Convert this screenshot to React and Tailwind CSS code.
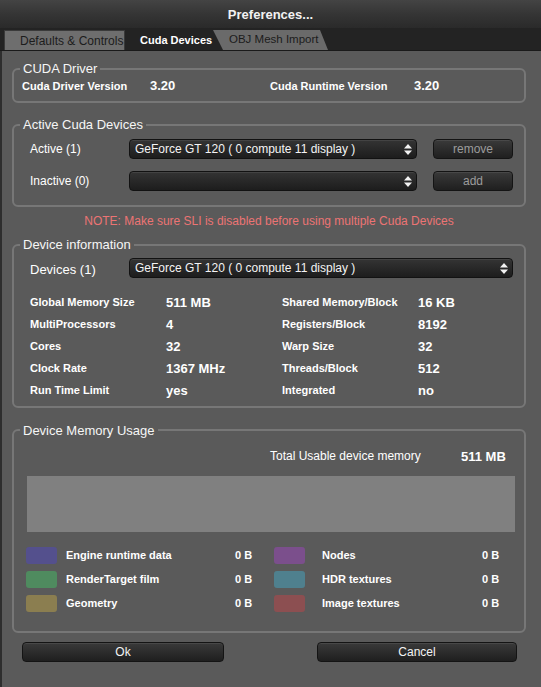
import { useState } from "react";

const Arrows = () => (
  <svg width="10" height="13" viewBox="0 0 10 13" className="shrink-0">
    <path d="M1 5.5 L5 1 L9 5.5 Z" fill="#f2f2f2" />
    <path d="M1 7.5 L5 12 L9 7.5 Z" fill="#f2f2f2" />
  </svg>
);

const Select = ({ value, className }) => (
  <div
    className={`flex h-[20px] items-center justify-between rounded-[4px] border border-[#121212] bg-linear-to-b from-[#343434] to-[#1d1d1d] pl-[5px] pr-[3px] text-[12px] text-[#f4f4f4] shadow-[inset_0_1px_0_rgba(255,255,255,0.08)] ${className}`}
  >
    <span className="truncate">{value}</span>
    <Arrows />
  </div>
);

const Button = ({ label, dim, className }) => (
  <button
    className={`flex h-[20px] items-center justify-center rounded-[4px] border border-[#141414] bg-linear-to-b from-[#3a3a3a] to-[#1f1f1f] text-[12px] shadow-[inset_0_1px_0_rgba(255,255,255,0.08)] ${dim ? "text-[#9c9c9c]" : "text-[#f4f4f4]"} ${className}`}
  >
    {label}
  </button>
);

const Group = ({ title, className, children }) => (
  <fieldset
    className={`w-[514px] rounded-[6px] border-2 border-[#777777] ${className}`}
  >
    <legend className="ml-[6px] px-[3px] text-[13px] leading-[15px] text-[#f6f6f6]">
      {title}
    </legend>
    {children}
  </fieldset>
);

const info = [
  ["Global Memory Size", "511 MB", "Shared Memory/Block", "16 KB"],
  ["MultiProcessors", "4", "Registers/Block", "8192"],
  ["Cores", "32", "Warp Size", "32"],
  ["Clock Rate", "1367 MHz", "Threads/Block", "512"],
  ["Run Time Limit", "yes", "Integrated", "no"],
];

const legend = [
  ["bg-[#54508d]", "Engine runtime data", "bg-[#7b4f8c]", "Nodes"],
  ["bg-[#4f8b5f]", "RenderTarget film", "bg-[#4f808e]", "HDR textures"],
  ["bg-[#8b7e50]", "Geometry", "bg-[#8c4f51]", "Image textures"],
];

export default function App() {
  const [tab] = useState("cuda");

  return (
    <div className="flex h-[687px] w-[541px] flex-col overflow-hidden bg-[#5a5a5a] font-['Liberation_Sans',Arial,sans-serif] text-white">
      {/* title bar */}
      <div className="flex h-[28px] items-center justify-center bg-linear-to-b from-[#444444] via-[#353535] to-[#2a2a2a] pt-[2px] text-[13px] font-bold text-[#f2f2f2]">
        Preferences...
      </div>

      {/* tabs */}
      <div className="flex h-[23px] items-end border-b border-[#1a1a1a] bg-[#232323] pl-[4px]">
        <div className="flex h-[20px] w-[121px] items-center overflow-hidden border border-b-0 border-[#3a3a3a] bg-[#6e6e6e] pl-[15px] text-[12px] whitespace-nowrap text-[#1c1c1c]">
          Defaults &amp; Controls
        </div>
        <div className="flex h-[20px] w-[88px] items-center pl-[15px] text-[11px] font-bold whitespace-nowrap text-white">
          {tab === "cuda" && "Cuda Devices"}
        </div>
        <div className="flex h-[20px] w-[115px] items-center bg-[#6a6a6a] pl-[16px] text-[11.5px] whitespace-nowrap text-[#1c1c1c] [clip-path:polygon(0_0,107px_0,115px_100%,10px_100%)]">
          OBJ Mesh Import
        </div>
      </div>

      {/* content */}
      <div className="flex flex-1 flex-col border-l-2 border-[#2e2e2e] pl-[10px]">
        <Group title="CUDA Driver" className="mt-[10px]">
          <div className="grid grid-cols-[128px_120px_144px_1fr] items-center pt-[2px] pb-[7px] pl-[8px] leading-[16px]">
            <span className="text-[11px] font-bold">Cuda Driver Version</span>
            <span className="text-[13px] font-bold">3.20</span>
            <span className="text-[11px] font-bold">Cuda Runtime Version</span>
            <span className="text-[13px] font-bold">3.20</span>
          </div>
        </Group>

        <Group title="Active Cuda Devices" className="mt-[14px]">
          <div className="flex flex-col gap-[12px] pt-[7px] pb-[14px] pl-[16px]">
            <div className="flex items-center">
              <span className="w-[99px] text-[12px]">Active (1)</span>
              <Select value="GeForce GT 120 ( 0 compute 11 display )" className="w-[288px]" />
              <Button label="remove" dim className="ml-[16px] w-[80px]" />
            </div>
            <div className="flex items-center">
              <span className="w-[99px] text-[12px]">Inactive (0)</span>
              <Select value="" className="w-[288px]" />
              <Button label="add" dim className="ml-[16px] w-[80px]" />
            </div>
          </div>
        </Group>

        <p className="mt-[7px] w-[514px] text-center text-[12px] leading-[14px] text-[#ec7474]">
          NOTE: Make sure SLI is disabled before using multiple Cuda Devices
        </p>

        <Group title="Device information" className="mt-[9px]">
          <div className="pt-[5px] pb-[4px] pl-[16px]">
            <div className="flex items-center">
              <span className="mt-[3px] w-[99px] text-[13px]">Devices (1)</span>
              <Select value="GeForce GT 120 ( 0 compute 11 display )" className="w-[384px]" />
            </div>
            <div className="mt-[12px] grid grid-cols-[136px_116px_136px_1fr]">
              {info.map((r) => (
                <div key={r[0]} className="contents">
                  <span className="flex h-[22px] items-center text-[11px] font-bold">{r[0]}</span>
                  <span className="flex h-[22px] items-center text-[13px] font-bold">{r[1]}</span>
                  <span className="flex h-[22px] items-center text-[11px] font-bold">{r[2]}</span>
                  <span className="flex h-[22px] items-center text-[13px] font-bold">{r[3]}</span>
                </div>
              ))}
            </div>
          </div>
        </Group>

        <Group title="Device Memory Usage" className="mt-[15px]">
          <div className="pt-[9px] pb-[15px]">
            <div className="grid h-[16px] grid-cols-[256px_191px_1fr] items-center">
              <span />
              <span className="text-[12px]">Total Usable device memory</span>
              <span className="text-[13px] font-bold">511 MB</span>
            </div>
            <div className="mt-[13px] ml-[13px] h-[56px] w-[488px] bg-[#808080]" />
            <div className="mt-[12px] ml-[12px] grid grid-cols-[40px_169px_39px_48px_160px_1fr]">
              {legend.map((r) => (
                <div key={r[1]} className="contents">
                  <span className="flex h-[24px] items-center">
                    <span className={`h-[17px] w-[31px] rounded-[3px] ${r[0]}`} />
                  </span>
                  <span className="flex h-[24px] items-center text-[11px] font-bold">{r[1]}</span>
                  <span className="flex h-[24px] items-center text-[11px] font-bold">0 B</span>
                  <span className="flex h-[24px] items-center">
                    <span className={`h-[17px] w-[31px] rounded-[3px] ${r[2]}`} />
                  </span>
                  <span className="flex h-[24px] items-center text-[11px] font-bold">{r[3]}</span>
                  <span className="flex h-[24px] items-center text-[11px] font-bold">0 B</span>
                </div>
              ))}
            </div>
          </div>
        </Group>

        <div className="mt-[9px] flex pl-[10px]">
          <Button label="Ok" className="w-[202px]" />
          <Button label="Cancel" className="ml-[93px] w-[200px]" />
        </div>
      </div>
    </div>
  );
}
